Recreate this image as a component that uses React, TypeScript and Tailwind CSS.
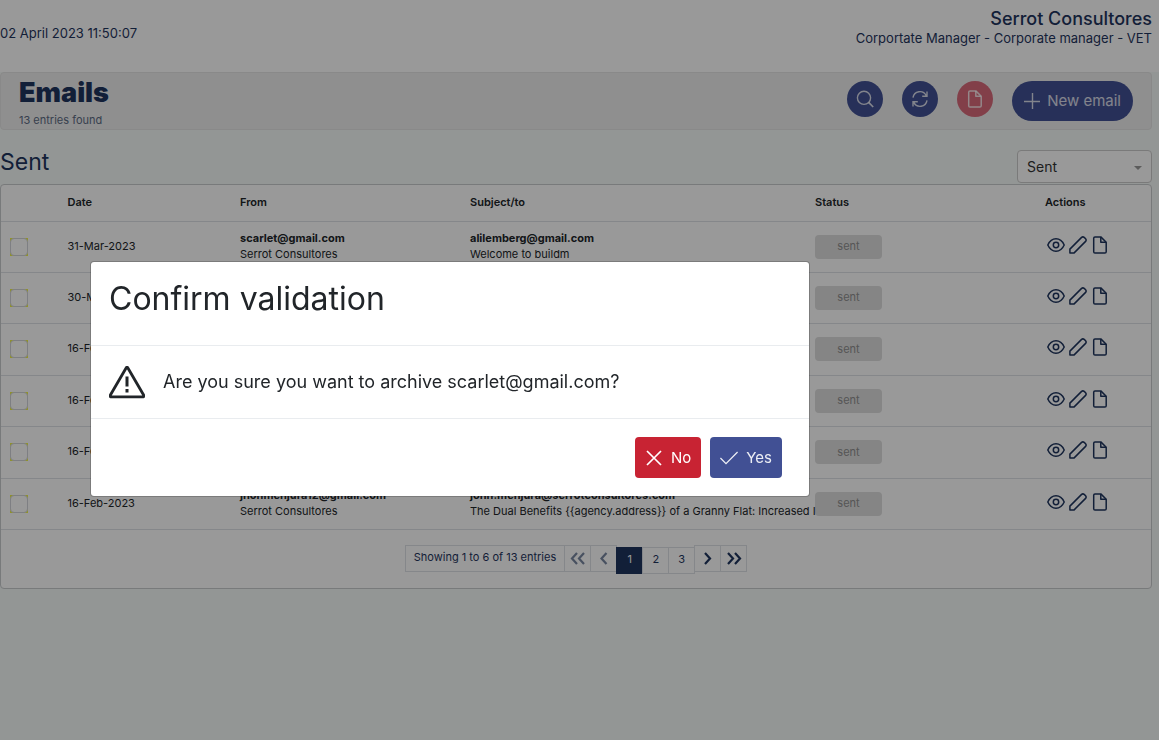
import React from "react";

const ink = "text-[#1f355e]";

function SearchIcon() {
  return (
    <svg viewBox="0 0 18 18" className="size-[18px]" fill="none" stroke="currentColor" strokeWidth="1.4" aria-hidden="true">
      <circle cx="8" cy="7.800" r="6.600" />
      <path d="M12.600 12.400 17.200 17" strokeWidth="1.700" />
    </svg>
  );
}

function SyncIcon() {
  return (
    <svg viewBox="0 0 18 18" className="size-[18px]" fill="none" stroke="currentColor" strokeWidth="1.4" aria-hidden="true">
      <path d="M2 7.6A7 7 0 0 1 15.2 5.6M16 1.6V6.2H11.2" />
      <path d="M16 10.4A7 7 0 0 1 2.8 12.4M2 16.4V11.8H6.8" />
    </svg>
  );
}

function FileIcon() {
  return (
    <svg viewBox="0 0 18 18" className="size-[18px]" fill="none" stroke="currentColor" strokeWidth="1.5" strokeLinejoin="round" aria-hidden="true">
      <path d="M4 .9H9.8L15.2 6.300V15.800Q15.2 17.100 13.900 17.100H4Q2.700 17.100 2.700 15.800V2.200Q2.700.9 4 .9Z" />
      <path d="M9.800 1V6.300H15.100" />
    </svg>
  );
}

function EyeIcon() {
  return (
    <svg viewBox="0 0 18 18" className="size-[18px]" fill="none" stroke="currentColor" strokeWidth="1.5" aria-hidden="true">
      <path d="M.8 9C2.600 5 5.500 2.800 9 2.800S15.400 5 17.200 9C15.400 13 12.500 15.200 9 15.200S2.600 13 .8 9Z" strokeLinejoin="round" />
      <circle cx="9" cy="9" r="2.700" />
    </svg>
  );
}

function PencilIcon() {
  return (
    <svg viewBox="0 0 18 18" className="size-[18px]" fill="none" stroke="currentColor" strokeWidth="1.5" strokeLinejoin="round" aria-hidden="true">
      <path d="M.9 17.100V13.100L12.600 1.400Q13.900.3 15.200 1.400L16.600 2.800Q17.700 4.100 16.600 5.400L4.900 17.100Z" />
    </svg>
  );
}

function PlusIcon() {
  return (
    <svg viewBox="0 0 16 16" className="size-4" stroke="currentColor" strokeWidth="1.400" aria-hidden="true">
      <path d="M8.500 0V16M0 8.500H16" />
    </svg>
  );
}

function WarningIcon() {
  return (
    <svg viewBox="0 0 36 36" className="size-9 shrink-0" fill="none" stroke="currentColor" aria-hidden="true">
      <path d="M17.400 3.500H18.600L34.600 31V32.800H1.400V31Z" strokeWidth="2.800" strokeLinejoin="round" />
      <path d="M18 12.500V22.500M18 25V28.500" strokeWidth="3" />
    </svg>
  );
}

function CrossIcon() {
  return (
    <svg viewBox="0 0 18 18" className="size-[18px]" stroke="currentColor" strokeWidth="1.700" aria-hidden="true">
      <path d="M2 2 16 16M16 2 2 16" />
    </svg>
  );
}

function CheckIcon() {
  return (
    <svg viewBox="0 0 18 18" className="size-[18px]" fill="none" stroke="currentColor" strokeWidth="1.300" aria-hidden="true">
      <path d="M.4 9 6 14.600 17.600 3" />
    </svg>
  );
}

function Chevrons({ d }: { d: string }) {
  return (
    <svg viewBox="0 0 16 16" className="size-4" fill="none" stroke="currentColor" strokeWidth="2.200" aria-hidden="true">
      <path d={d} />
    </svg>
  );
}

const rows = [
  { date: "31-Mar-2023", from: "scarlet@gmail.com", to: "alilemberg@gmail.com", subject: "Welcome to buildm" },
  { date: "30-Mar-2023", from: "scarlet@gmail.com", to: "alilemberg@gmail.com", subject: "Welcome to buildm" },
  { date: "16-Feb-2023", from: "jhonmenjura12@gmail.com", to: "john.menjura@serrotconsultores.com", subject: "Welcome to buildm" },
  { date: "16-Feb-2023", from: "jhonmenjura12@gmail.com", to: "john.menjura@serrotconsultores.com", subject: "Welcome to buildm" },
  { date: "16-Feb-2023", from: "jhonmenjura12@gmail.com", to: "john.menjura@serrotconsultores.com", subject: "Welcome to buildm" },
  {
    date: "16-Feb-2023",
    from: "jhonmenjura12@gmail.com",
    to: "john.menjura@serrotconsultores.com",
    subject: "The Dual Benefits {{agency.address}} of a Granny Flat: Increased I",
  },
];

const round = "flex size-9 items-center justify-center rounded-full text-white/80";
const pageBox = "-ml-px flex h-[27px] w-[27px] items-center justify-center border border-[#dee2e6]";

export default function App() {
  return (
    <div className="min-h-screen bg-[#f6faf8] font-['Inter',sans-serif] text-[11px] leading-4 text-[#212529]">
      <header className={`flex h-[72px] items-center justify-between bg-white pr-[7px] text-[13px] ${ink}`}>
        <time className="pb-[6px]">02 April 2023 11:50:07</time>
        <div className="pb-4 text-right">
          <div className="text-lg leading-5 font-medium">Serrot Consultores</div>
          <div className="leading-[18px]">Corportate Manager - Corporate manager - VET</div>
        </div>
      </header>

      <main className="pr-[7px]">
        <section className="flex h-[58px] items-start justify-between rounded border border-[#e4e4e4] bg-[#efefef] px-[18px]">
          <div className={ink}>
            <h1 className="pt-1 text-[27px] leading-8 font-black">Emails</h1>
            <p className="pt-[3px] text-[#5d6b83]">13 entries found</p>
          </div>
          <div className="flex items-start gap-[19px] pt-2">
            <button aria-label="Search" className={`${round} bg-[#415094]`}><SearchIcon /></button>
            <button aria-label="Refresh" className={`${round} bg-[#415094]`}><SyncIcon /></button>
            <button aria-label="Archive" className={`${round} bg-[#d9697a]`}><FileIcon /></button>
            <button className="flex h-10 items-center gap-[7px] rounded-full bg-[#415094] px-3 text-[15px] text-white/80">
              <PlusIcon /> New email
            </button>
          </div>
        </section>

        <div className="flex h-[54px] items-end justify-between">
          <h2 className={`pb-[6px] text-[23px] leading-8 ${ink}`}>Sent</h2>
          <div className="relative mb-px">
            <select aria-label="Folder" defaultValue="Sent" className="h-[33px] w-[135px] appearance-none rounded border border-[#ccc] bg-white pl-[9px] text-sm text-[#333]">
              <option>Sent</option>
            </select>
            <span className="pointer-events-none absolute top-4 right-[10px] border-x-4 border-t-4 border-x-transparent border-t-[#999]" />
          </div>
        </div>

        <section className="rounded border border-[#c8cbcd] bg-white pb-[14px]">
          <table className="w-full table-fixed border-collapse text-left">
            <thead>
              <tr className="h-9 border-b border-[#dee2e6]">
                <td className="w-[5%]"></td>
                <th className="w-[15%] px-[9px] pb-[2px] font-semibold">Date</th>
                <th className="w-[20%] px-[9px] pb-[2px] font-semibold">From</th>
                <th className="w-[30%] px-[9px] pb-[2px] font-semibold">Subject/to</th>
                <th className="w-[20%] px-[9px] pb-[2px] font-semibold">Status</th>
                <th className="w-[10%] px-[9px] pb-[2px] font-semibold">Actions</th>
              </tr>
            </thead>
            <tbody>
              {rows.map((row, i) => (
                <tr key={i} className="h-[51px] border-b border-[#dee2e6] nth-[2n+3]:h-[52px]">
                  <td className="pl-[9px]">
                    <span className="block size-[18px] bg-[#eef24a]">
                      <input type="checkbox" aria-label={`Select email ${i + 1}`} className="block size-[18px] appearance-none rounded border border-[#d2d4da] bg-white" />
                    </span>
                  </td>
                  <td className="px-[9px] pb-[2px]">{row.date}</td>
                  <td className="px-[9px] pb-[2px]">
                    <div className="font-bold">{row.from}</div>
                    <div>Serrot Consultores</div>
                  </td>
                  <td className="pb-[2px] pl-[9px]">
                    <div className="font-bold">{row.to}</div>
                    <div className="whitespace-nowrap">{row.subject}</div>
                  </td>
                  <td className="px-[9px]">
                    <span className="flex h-6 w-[67px] items-center justify-center rounded bg-[#dedede] pb-px text-[#8f8f8f]">sent</span>
                  </td>
                  <td className={`px-[9px] pb-1 ${ink}`}>
                    <div className="flex gap-1 pl-[2px]">
                      <button aria-label="View"><EyeIcon /></button>
                      <button aria-label="Edit"><PencilIcon /></button>
                      <button aria-label="Archive"><FileIcon /></button>
                    </div>
                  </td>
                </tr>
              ))}
            </tbody>
          </table>
          <nav aria-label="Pages" className={`flex items-start justify-center pt-[15px] ${ink}`}>
            <span className="h-[27px] border border-[#dee2e6] px-2 leading-[23px]">Showing 1 to 6 of 13 entries</span>
            <button aria-label="First page" className={`${pageBox} text-[#7987a1]`}><Chevrons d="M7 3 2 8.500 7 14M14 3 9 8.500 14 14" /></button>
            <button aria-label="Previous page" className={`${pageBox} text-[#7987a1]`}><Chevrons d="M10.500 3 5.500 8.500 10.500 14" /></button>
            <button className="mt-[2px] -ml-px h-[27px] w-[27px] bg-[#1f355e] pb-[2px] text-white">1</button>
            <button className={`${pageBox} mt-[2px] pb-[2px]`}>2</button>
            <button className={`${pageBox} mt-[2px] pb-[2px]`}>3</button>
            <button aria-label="Next page" className={pageBox}><Chevrons d="M5 3 10 8.500 5 14" /></button>
            <button aria-label="Last page" className={pageBox}><Chevrons d="M2 3 7 8.500 2 14M9 3 14 8.500 9 14" /></button>
          </nav>
        </section>
      </main>

      <div className="fixed inset-0 bg-black/40 px-[90px] pt-[261px]">
        <div role="dialog" aria-modal="true" aria-labelledby="dialog-title" className="max-w-[720px] rounded border border-black/20 bg-white bg-clip-padding">
          <h2 id="dialog-title" className="border-b border-[#e9ecef] px-[18px] pt-[17px] pb-[26px] text-[32px] leading-10">Confirm validation</h2>
          <div className="flex items-center gap-[18px] border-b border-[#e9ecef] p-[18px] text-lg">
            <WarningIcon />
            <p>Are you sure you want to archive scarlet@gmail.com?</p>
          </div>
          <div className="flex justify-end gap-[9px] py-[18px] pr-[27px] text-[15px] text-white">
            <button className="flex h-[41px] items-center gap-2 rounded bg-[#c82333] px-[10px]"><CrossIcon /> No</button>
            <button className="flex h-[41px] items-center gap-2 rounded bg-[#415094] px-[10px] text-white/90"><CheckIcon /> Yes</button>
          </div>
        </div>
      </div>
    </div>
  );
}
